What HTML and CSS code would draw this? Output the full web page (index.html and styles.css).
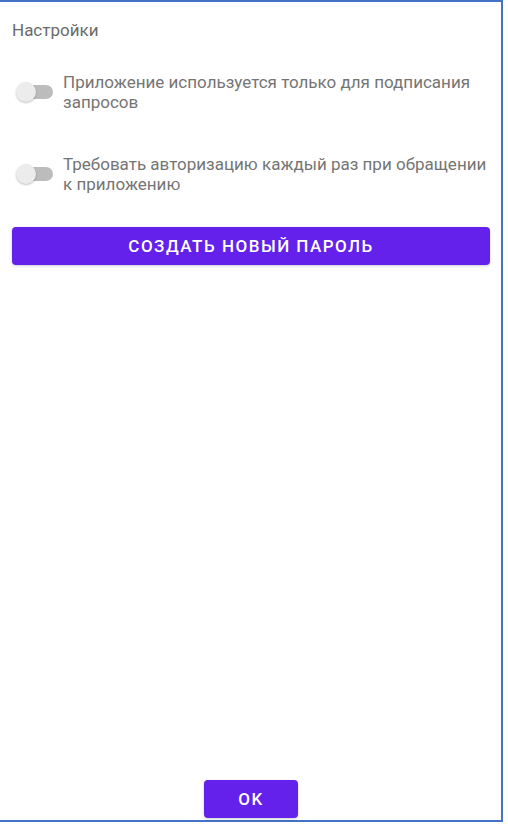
FILE: index.html
```html
<!DOCTYPE html>
<html lang="ru">
  <head>
    <meta charset="utf-8" />
    <meta name="viewport" content="width=device-width, initial-scale=1.0" />
    <title>Настройки</title>
    <link rel="stylesheet" href="styles.css">
  </head>

  <body>
    <main class="screen">
      <div class="title">Настройки</div>

      <label class="setting">
        <span class="switch"><span class="switch-track"></span><span class="switch-thumb"></span></span>
        <span class="setting-text">Приложение используется только для подписания запросов</span>
      </label>

      <label class="setting">
        <span class="switch"><span class="switch-track"></span><span class="switch-thumb"></span></span>
        <span class="setting-text">Требовать авторизацию каждый раз при обращении к приложению</span>
      </label>

      <button class="btn btn-wide" type="button">Создать новый пароль</button>

      <div class="spacer"></div>

      <div class="footer">
        <button class="btn btn-ok" type="button">OK</button>
      </div>
    </main>
  </body>
</html>
```

FILE: styles.css
```css
body {
  margin: 0;
  background-color: #ffffff;
  font-family: Roboto, "Noto Sans", sans-serif;
}

.screen {
  box-sizing: border-box;
  width: 503px;
  height: 822px;
  border-top: 2px solid #4472c4;
  border-right: 2px solid #4472c4;
  border-bottom: 2px solid #4472c4;
  padding: 18px 11px 0 12px;
  display: flex;
  flex-direction: column;
}

.title {
  font-size: 17px;
  line-height: 20px;
  color: #6b6b6b;
}

.setting {
  display: flex;
  align-items: center;
  gap: 10px;
  margin-top: 32px;
  padding-left: 4px;
}

.setting + .setting {
  margin-top: 42px;
}

.setting-text {
  font-size: 17px;
  line-height: 20px;
  color: #757575;
}

/* unchecked material switch */
.switch {
  position: relative;
  flex: 0 0 37px;
  height: 22px;
}
.switch-track {
  position: absolute;
  left: 3px;
  top: 4px;
  width: 34px;
  height: 14px;
  border-radius: 7px;
  background-color: #bcbcbc;
}
.switch-thumb {
  position: absolute;
  left: 0;
  top: 1px;
  width: 20px;
  height: 20px;
  border-radius: 50%;
  background-color: #ececec;
  box-shadow: 0 1px 2px rgba(0, 0, 0, 0.25);
}

.btn {
  border: none;
  border-radius: 4px;
  background-color: #6321eb;
  color: #ffffff;
  font-family: Roboto, "Noto Sans", sans-serif;
  font-size: 17px;
  font-weight: 500;
  letter-spacing: 1.5px;
  text-transform: uppercase;
  height: 38px;
  cursor: pointer;
  box-shadow: 0 1px 3px rgba(0, 0, 0, 0.2);
}

.btn-wide {
  margin-top: 33px;
  width: 100%;
}

.spacer {
  flex: 1;
}

.footer {
  display: flex;
  justify-content: center;
  padding-bottom: 2px;
}

.btn-ok {
  width: 94px;
}
```
